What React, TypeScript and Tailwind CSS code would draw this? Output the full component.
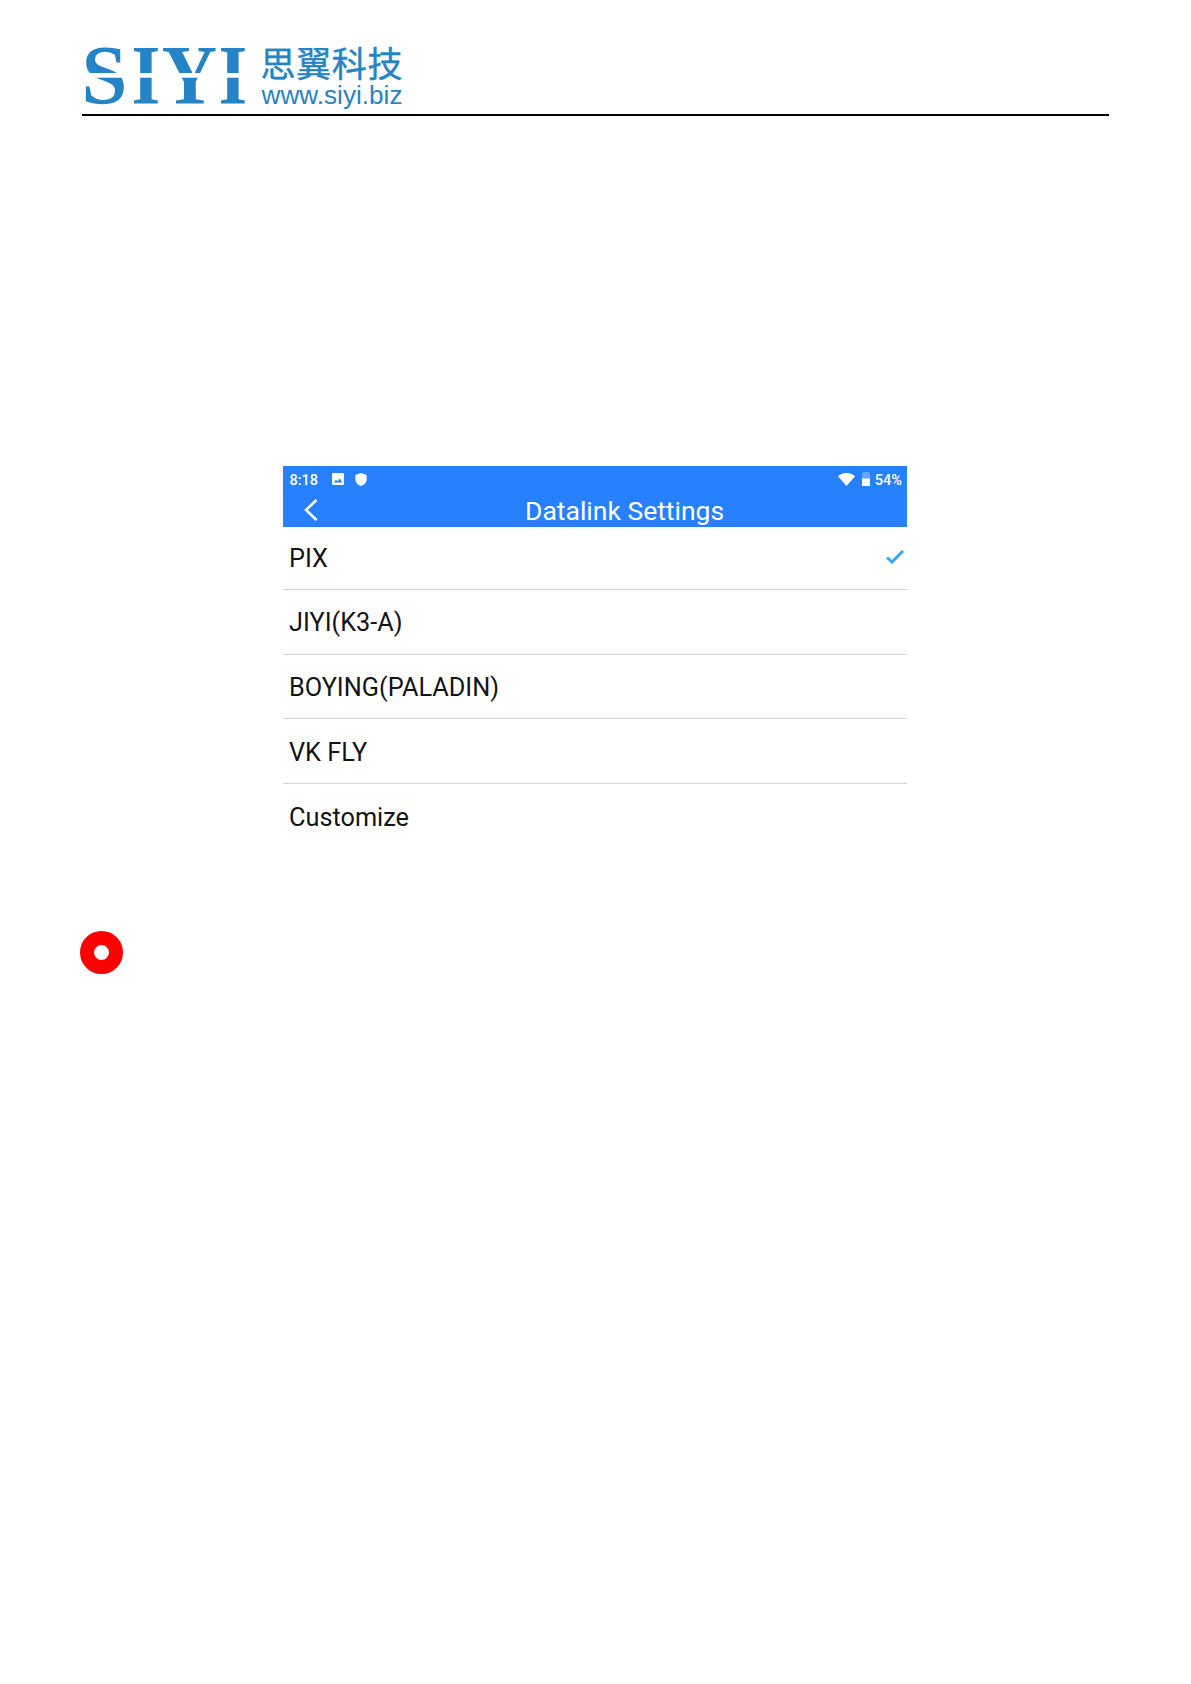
const protocols = ['PIX', 'JIYI(K3-A)', 'BOYING(PALADIN)', 'VK FLY', 'Customize'];

function Logo() {
  return (
    <svg
      width="330"
      height="70"
      viewBox="82 42 330 70"
      fill="#2484c6"
      className="overflow-visible"
      role="img"
      aria-label="SIYI"
    >
      <g className="font-['Liberation_Serif',serif] font-bold" fontSize="85">
        <text transform="translate(81.4 104) scale(0.97 1)">S</text>
        <text transform="translate(131.600 104) scale(0.87 1)">I</text>
        <text transform="translate(161.800 104) scale(0.9 1)">Y</text>
        <text transform="translate(218.600 104) scale(0.87 1)">I</text>
      </g>
      <rect x="84" y="73" width="164" height="4.700" fill="#fff" />
      <text
        x="260.5"
        y="76.7"
        fontSize="35"
        textLength="142"
        stroke="#2484c6"
        strokeWidth="0.400"
        className="font-['Noto_Sans_CJK_SC',sans-serif]"
      >
        思翼科技
      </text>
      <text
        x="261.5"
        y="103.5"
        fontSize="25"
        textLength="141"
        lengthAdjust="spacingAndGlyphs"
        className="font-['Liberation_Sans',sans-serif]"
      >
        www.siyi.biz
      </text>
    </svg>
  );
}

function StatusBar() {
  return (
    <div className="flex h-[27px] items-center pl-[6.5px] pr-[5px] text-[14.5px] font-medium leading-[28px]">
      <span className="w-[42.5px] pt-[2px]">8:18</span>
      <svg width="12" height="12" viewBox="0 0 12 12" className="mb-px mr-[11px]">
        <rect width="12" height="12" rx="1.2" fill="#fff" />
        <path d="M1.8 9.6 4 6.6l1.5 1.8 2.1-2.8 2.8 4z" fill="#2680ff" />
      </svg>
      <svg width="12" height="13" viewBox="0 0 12 13" className="mb-px">
        <path d="M6 0 11 1.700Q11.700 2 11.700 3v3C11.700 9.500 9 12 6 13 3 12 .3 9.500.3 6V3Q.3 2 1 1.700z" fill="#fff" />
      </svg>
      <svg width="17" height="13" viewBox="0 0 17 13" className="mb-px ml-auto mr-[7px]">
        <path d="M0 3.200C5-1 12-1 17 3.200L8.500 13z" fill="#fff" />
      </svg>
      <svg width="8" height="14" viewBox="0 0 8 14" className="mb-px mr-[5px]">
        <path d="M1 0h6v1.500h1V7H0V1.500h1z" fill="#fff" fillOpacity=".3" />
        <path d="M0 6.500h8V14H0z" fill="#fff" />
      </svg>
      <span className="pt-[2px]">54%</span>
    </div>
  );
}

export default function App() {
  return (
    <div className="min-h-[1684px] w-[1191px] bg-white pl-[82px] pt-[42px]">
      <header className="flex h-[74px] w-[1027px] items-start border-b-2 border-black">
        <Logo />
      </header>

      <main>
        <section className="ml-[201px] mt-[350px] w-[624px] font-[Roboto,sans-serif]">
          <div className="h-[61px] bg-[#2680ff] text-white">
            <StatusBar />
            <div className="flex h-[34px] items-center">
              <svg width="14" height="22" viewBox="0 0 14 22" fill="none" className="ml-[21px]">
                <path d="M12.500 1 2 11l10.500 10" stroke="#fff" strokeWidth="2.500" />
              </svg>
              <h1 className="ml-[207px] pt-px text-[26.5px] leading-[34px]">Datalink Settings</h1>
            </div>
          </div>

          <ul className="text-[25.3px] text-[#141414]">
            {protocols.map((name, i) => (
              <li
                key={name}
                className="flex h-[64.6px] items-center border-b border-[#d4d4d4] pl-[6px] pr-[3.500px] pt-[3px] first:h-[63px] first:pt-px last:border-0"
              >
                <span>{name}</span>
                {i === 0 && (
                  <svg width="18" height="14" viewBox="0 0 18 14" fill="none" className="mb-[3px] ml-auto">
                    <path d="m1 7.500 5 4.500L17 1" stroke="#36a9f5" strokeWidth="3" />
                  </svg>
                )}
              </li>
            ))}
          </ul>
        </section>

        <div className="-ml-[2px] mt-[83px] size-[43px] rounded-full border-[14px] border-[#ff0000] bg-white" />
      </main>
    </div>
  );
}
